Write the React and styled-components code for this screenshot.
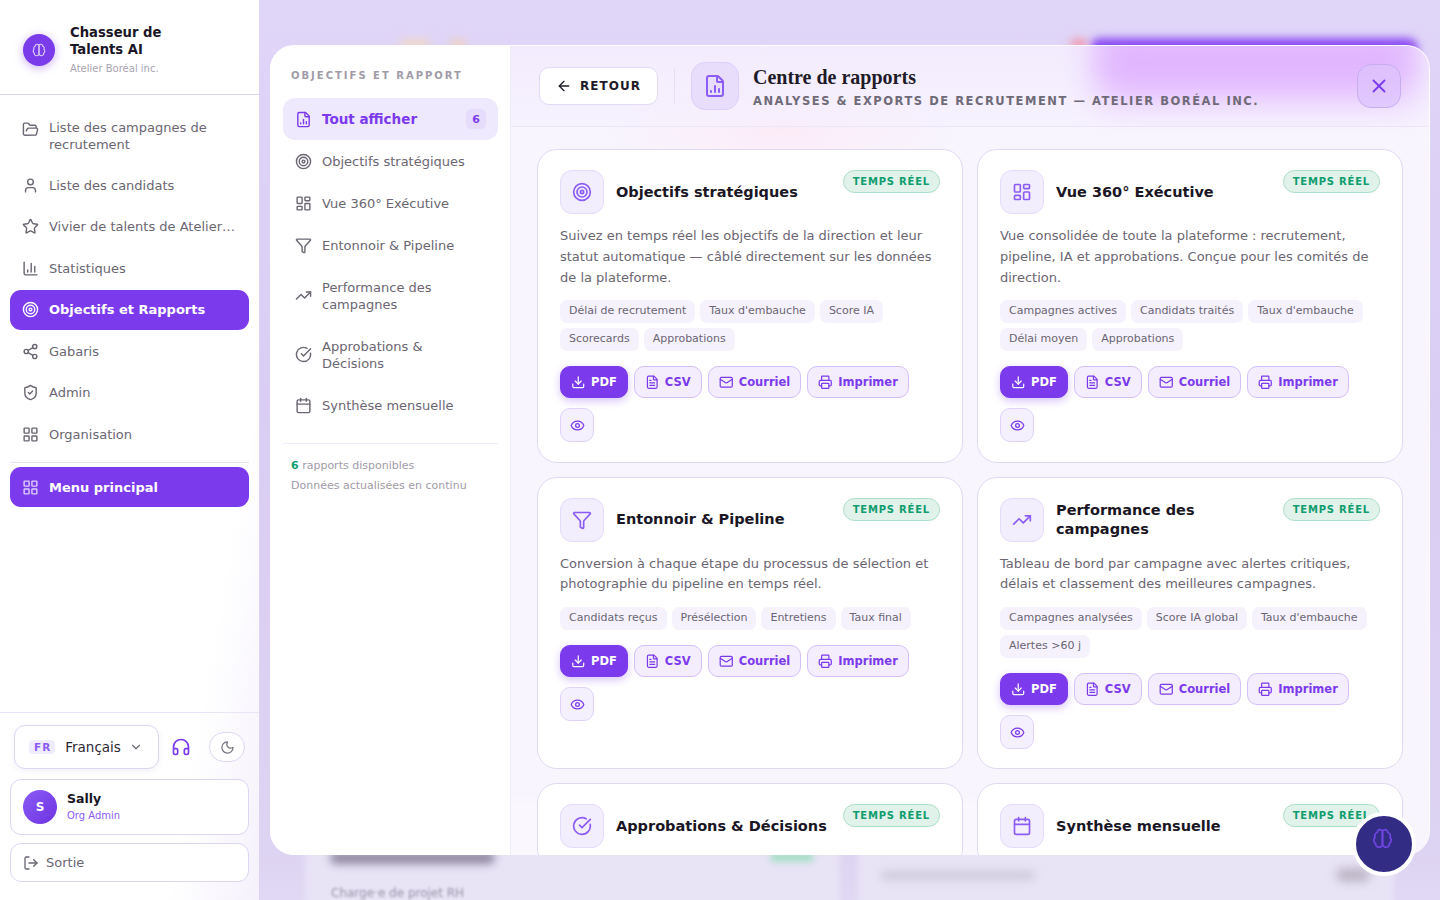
import React from "react";
import styled, { createGlobalStyle } from "styled-components";
import {
  FolderOpen, User, Star, ChartColumn, Target, Share2, ShieldCheck, LayoutGrid, LayoutDashboard,
  Headphones, Moon, LogOut, ChevronDown, ArrowLeft, X, FileChartColumn, Funnel, TrendingUp,
  CircleCheckBig, Calendar, Download, FileText, Mail, Printer, Eye,
} from "lucide-react";

const GlobalStyle = createGlobalStyle`
  html, body { margin: 0; padding: 0; height: 100%; overflow: hidden; }
  body { font-family: "DejaVu Sans", sans-serif; color: #1a1625; background: #efeafb; }
  * { box-sizing: border-box; }
`;

const Page = styled.div`
  display: flex;
  width: 1440px;
  height: 900px;
  overflow: hidden;
  position: relative;
`;

const Sidebar = styled.aside`
  width: 260px;
  flex: none;
  height: 900px;
  display: flex;
  flex-direction: column;
  border-right: 1px solid #ddd3f5;
  background: linear-gradient(100deg, #fff 78%, #f5f1fc 100%);
  position: relative;
  z-index: 3;
`;
const Brand = styled.div`
  height: 95px;
  flex: none;
  display: flex;
  align-items: center;
  gap: 15px;
  padding: 5px 23px 0;
  border-bottom: 1px solid #ddd6f3;
`;
const BrandLogo = styled.div`
  width: 32px;
  height: 32px;
  flex: none;
  border-radius: 50%;
  background: #7a3bea;
  color: #e0d2fb;
  display: flex;
  align-items: center;
  justify-content: center;
  box-shadow: 0 2px 10px rgba(124, 58, 237, 0.4);
`;
const BrandText = styled.div`
  width: 130px;
`;
const BrandName = styled.div`
  font-size: 13.2px;
  line-height: 17px;
  font-weight: 700;
  color: #1a1625;
`;
const BrandSub = styled.div`
  font-size: 10px;
  line-height: 12px;
  margin-top: 5px;
  color: #a8a3b0;
`;
const NavList = styled.nav`
  padding: ${(p) => (p.$flush ? "0 10px" : "13.5px 10px 0")};
  display: flex;
  flex-direction: column;
  gap: 1.5px;
`;
const NavItem = styled.div`
  display: flex;
  align-items: ${(p) => (p.$tall ? "flex-start" : "center")};
  gap: 10px;
  min-height: 40px;
  padding: ${(p) => (p.$tall ? "10px 12px 11px" : "0 12px")};
  border-radius: 11px;
  font-size: 13px;
  line-height: 17px;
  font-weight: ${(p) => (p.$active ? 700 : 400)};
  color: ${(p) => (p.$active ? "#fff" : "#6b6672")};
  background: ${(p) => (p.$active ? "#7c3aed" : "transparent")};
  svg {
    flex: none;
    margin-top: ${(p) => (p.$tall ? "2px" : "0")};
    opacity: ${(p) => (p.$dim ? 0.75 : 1)};
  }
`;
const NavLabel = styled.span`
  white-space: ${(p) => (p.$wrap ? "normal" : "nowrap")};
`;
const SideDivider = styled.div`
  height: 1px;
  background: #e6e0f6;
  margin: 8px 10px 4px;
`;
const SideFooter = styled.div`
  margin-top: auto;
  border-top: 1px solid #e9e4f8;
  padding: 12px 10px 18px;
  display: flex;
  flex-direction: column;
`;
const ToolRow = styled.div`
  display: flex;
  align-items: center;
  padding-left: 4px;
  height: 44px;
  margin-bottom: 10px;
`;
const LangSelect = styled.div`
  width: 145px;
  height: 44px;
  border: 1px solid #ddd6f3;
  border-radius: 11px;
  background: #fff;
  display: flex;
  align-items: center;
  padding: 0 14px;
  font-size: 13.5px;
  color: #2b2733;
  box-shadow: 0 2px 6px rgba(90, 60, 180, 0.08);
`;
const LangCode = styled.span`
  font-size: 10.5px;
  font-weight: 700;
  letter-spacing: 1px;
  color: #8b5cf6;
  background: #f1ecfd;
  border-radius: 4px;
  padding: 1px 4px 1px 5px;
  margin-right: 10px;
`;
const Caret = styled(ChevronDown)`
  margin-left: 8px;
  color: #6b6672;
`;
const HeadsetBtn = styled.div`
  width: 20px;
  margin-left: 12px;
  color: #7c3aed;
  display: flex;
`;
const ThemeBtn = styled.div`
  width: 36px;
  height: 30px;
  margin-left: 18px;
  border-radius: 15px;
  border: 1px solid #ddd6f3;
  background: #fff;
  color: #77727f;
  display: flex;
  align-items: center;
  justify-content: center;
`;
const UserCard = styled.div`
  height: 56px;
  border: 1px solid #ddd6f3;
  border-radius: 11px;
  display: flex;
  align-items: center;
  gap: 10px;
  padding: 0 12px;
  background: #fff;
`;
const Avatar = styled.div`
  width: 34px;
  height: 34px;
  border-radius: 50%;
  background: linear-gradient(135deg, #8b5cf6, #6d32e0);
  color: #fff;
  font-size: 12px;
  font-weight: 700;
  display: flex;
  align-items: center;
  justify-content: center;
`;
const UserName = styled.div`
  font-size: 12.5px;
  font-weight: 700;
  line-height: 16px;
  color: #1a1625;
`;
const UserRole = styled.div`
  font-size: 10px;
  line-height: 15px;
  margin-top: 1px;
  color: #8b5cf6;
`;
const LogoutBtn = styled.div`
  height: 39px;
  margin-top: 8px;
  border: 1px solid #ddd6f3;
  border-radius: 11px;
  display: flex;
  align-items: center;
  gap: 7px;
  padding: 0 12px;
  font-size: 13px;
  color: #6b6672;
  background: #fff;
`;

/* page behind the modal, only seen blurred */
const Backdrop = styled.div`
  flex: 1;
  position: relative;
  background: linear-gradient(180deg, #e0d6f8 0%, #d9cdf3 45%, #ddd3f2 94%, #e0d8f4 100%);
  overflow: hidden;
`;
const BlurBar = styled.div`
  position: absolute;
  left: ${(p) => p.$x}px;
  top: ${(p) => p.$y}px;
  width: ${(p) => p.$w}px;
  height: ${(p) => p.$h}px;
  background: ${(p) => p.$c};
  border-radius: ${(p) => p.$r || 8}px;
  filter: blur(${(p) => p.$b || 5}px);
`;
const BlurText = styled.div`
  position: absolute;
  left: 71px;
  top: 886px;
  font-size: 12px;
  color: #9a94a8;
  filter: blur(1.2px);
`;

const Modal = styled.div`
  position: absolute;
  left: 270px;
  top: 45px;
  width: 1160px;
  height: 810px;
  border-radius: 24px;
  display: flex;
  overflow: hidden;
  z-index: 4;
  border-top: 1px solid #fff;
  border-right: 1px solid rgba(255, 255, 255, 0.7);
  background: rgba(255, 255, 255, 0.78);
`;
const ModalNav = styled.div`
  width: 241px;
  flex: none;
  background: #fff;
  border-right: 1px solid #f0ebfa;
  padding: 23px 12px 0 13px;
`;
const NavHeading = styled.div`
  font-size: 10px;
  line-height: 14px;
  font-weight: 700;
  letter-spacing: 2px;
  color: #a09ba8;
  padding-left: 8px;
  margin-bottom: 15px;
  white-space: nowrap;
`;
const ReportLink = styled.div`
  display: flex;
  align-items: center;
  gap: 10px;
  min-height: 42px;
  padding: ${(p) => (p.$tall ? "12.5px 12px" : "0 12px")};
  border-radius: 12px;
  font-size: ${(p) => (p.$active ? "13.5px" : "13px")};
  line-height: 17px;
  font-weight: ${(p) => (p.$active ? 700 : 400)};
  color: ${(p) => (p.$active ? "#7c3aed" : "#6b6672")};
  background: ${(p) => (p.$active ? "#efe9fd" : "transparent")};
  svg { flex: none; }
`;
const CountBadge = styled.span`
  margin-left: auto;
  width: 20px;
  height: 20px;
  border-radius: 5px;
  background: #e6dcfc;
  font-size: 11px;
  display: flex;
  align-items: center;
  justify-content: center;
`;
const NavFoot = styled.div`
  margin-top: 17px;
  border-top: 1px solid #f0ebfa;
  padding: 12px 8px 0;
  font-size: 11px;
  line-height: 20px;
  color: #a09ba8;
  b { color: #0f9d6e; }
`;
const ModalMain = styled.div`
  flex: 1;
  min-width: 0;
  display: flex;
  flex-direction: column;
  background: radial-gradient(ellipse 180px 60px at 270px 82px, rgba(255, 225, 240, 0.5), transparent), rgba(250, 247, 254, 0.35);
`;
const ModalHead = styled.div`
  height: 81px;
  flex: none;
  display: flex;
  align-items: center;
  padding: 0 28px;
  position: relative;
  border-bottom: 1px solid #ece6f9;
  background: linear-gradient(180deg, rgba(240, 231, 253, 0.7), rgba(245, 240, 254, 0.7));
`;
const HeadGlow = styled.div`
  position: absolute;
  left: 585px;
  top: -22px;
  width: 320px;
  height: 76px;
  background: rgba(220, 165, 255, 0.75);
  border-radius: 16px;
  filter: blur(16px);
`;
const BackBtn = styled.div`
  width: 119px;
  height: 38px;
  border: 1px solid #e2daf6;
  border-radius: 10px;
  background: #fff;
  display: flex;
  align-items: center;
  justify-content: center;
  gap: 8px;
  font-size: 12px;
  font-weight: 700;
  letter-spacing: 1px;
  color: #1f1b29;
`;
const HeadSep = styled.div`
  width: 1px;
  height: 36px;
  background: #e6dff7;
  margin: 0 16px;
`;
const HeadIcon = styled.div`
  width: 48px;
  height: 48px;
  border-radius: 14px;
  border: 1px solid #dccffa;
  background: #e8defc;
  color: #8b5cf6;
  display: flex;
  align-items: center;
  justify-content: center;
  margin-right: 14px;
`;
const HeadText = styled.div`
  position: relative;
  padding-top: 2px;
`;
const HeadTitle = styled.div`
  font-family: "Liberation Serif", serif;
  font-size: 20px;
  line-height: 25px;
  font-weight: 700;
  color: #1f1b29;
`;
const HeadSub = styled.div`
  font-size: 11.5px;
  line-height: 15px;
  margin-top: 4px;
  font-weight: 700;
  letter-spacing: 1.53px;
  color: #6f6a78;
  white-space: nowrap;
`;
const CloseBtn = styled.div`
  position: relative;
  margin-left: auto;
  width: 44px;
  height: 44px;
  border-radius: 14px;
  border: 1px solid #c5aef0;
  background: rgba(220, 195, 252, 0.75);
  color: #7c3aed;
  display: flex;
  align-items: center;
  justify-content: center;
`;
const CardGrid = styled.div`
  display: grid;
  grid-template-columns: 426px 426px;
  grid-auto-rows: min-content;
  gap: 14px;
  padding: 22px 26px;
  overflow: hidden;
  flex: 1;
`;
const Card = styled.div`
  border: 1px solid #e0d9f2;
  border-radius: 20px;
  background: #fff;
  padding: 20px 22px 19.2px;
`;
const CardTop = styled.div`
  display: flex;
  align-items: flex-start;
  min-height: 44px;
`;
const CardIcon = styled.div`
  width: 44px;
  height: 44px;
  flex: none;
  border-radius: 12px;
  border: 1px solid #e4daf9;
  background: #f3eefd;
  color: #8b5cf6;
  display: flex;
  align-items: center;
  justify-content: center;
  margin-right: 12px;
`;
const CardTitle = styled.div`
  flex: 1;
  align-self: center;
  font-size: 14.5px;
  line-height: 19px;
  font-weight: 700;
  color: #1a1625;
`;
const LiveBadge = styled.div`
  flex: none;
  height: 23px;
  padding: 0 9px;
  border-radius: 12px;
  border: 1px solid #acdfc9;
  background: #e0f2ea;
  color: #0f9d6e;
  font-size: 10px;
  font-weight: 700;
  letter-spacing: 0.8px;
  display: flex;
  align-items: center;
  white-space: nowrap;
`;
const CardDesc = styled.p`
  margin: 12px 0 12px;
  font-size: 13px;
  line-height: 1.6;
  color: #6b6672;
`;
const Chips = styled.div`
  display: flex;
  flex-wrap: wrap;
  gap: 5px;
  margin-bottom: 15px;
`;
const Chip = styled.span`
  height: 23px;
  padding: 0 9px;
  border-radius: 7px;
  background: #f5f2fe;
  font-size: 11px;
  line-height: 21px;
  color: #6b6672;
`;
const Actions = styled.div`
  display: flex;
  flex-wrap: wrap;
  gap: 10px 6px;
`;
const ActionBtn = styled.div`
  height: 32px;
  padding: 0 10px;
  border-radius: 10px;
  display: flex;
  align-items: center;
  gap: 5.5px;
  font-size: 11.5px;
  font-weight: 700;
  color: ${(p) => (p.$primary ? "#fff" : "#7c3aed")};
  background: ${(p) => (p.$primary ? "#7c3aed" : "#f3edfd")};
  border: 1px solid ${(p) => (p.$primary ? "#7c3aed" : "#d4c0f8")};
  box-shadow: ${(p) => (p.$primary ? "0 3px 8px rgba(124, 58, 237, 0.3)" : "none")};
`;
const EyeBtn = styled.div`
  width: 34px;
  height: 34px;
  border-radius: 10px;
  border: 1px solid #e0d2fb;
  background: #f5f0fe;
  color: #7c3aed;
  display: flex;
  align-items: center;
  justify-content: center;
`;
const Fab = styled.div`
  position: absolute;
  left: 1352px;
  top: 812px;
  width: 64px;
  height: 64px;
  border-radius: 50%;
  border: 4px solid #fff;
  background: #332c85;
  color: #6f45e0;
  display: flex;
  justify-content: center;
  padding: 12px 4px 0 0;
  z-index: 5;
`;

function BrainGlyph({ size, strokeWidth }) {
  return (
    <svg width={size} height={size} viewBox="0 0 24 24" fill="none" stroke="currentColor" strokeWidth={strokeWidth} strokeLinecap="round" strokeLinejoin="round">
      <path d="M12 5a3 3 0 1 0-5.997.125 4 4 0 0 0-2.526 5.77 4 4 0 0 0 .556 6.588A4 4 0 1 0 12 18Z" />
      <path d="M12 5a3 3 0 1 1 5.997.125 4 4 0 0 1 2.526 5.77 4 4 0 0 1-.556 6.588A4 4 0 1 1 12 18Z" />
    </svg>
  );
}

const mainNav = [
  { icon: FolderOpen, label: "Liste des campagnes de recrutement", tall: true },
  { icon: User, label: "Liste des candidats" },
  { icon: Star, label: "Vivier de talents de Atelier…" },
  { icon: ChartColumn, label: "Statistiques" },
  { icon: Target, label: "Objectifs et Rapports", active: true },
  { icon: Share2, label: "Gabaris" },
  { icon: ShieldCheck, label: "Admin" },
  { icon: LayoutGrid, label: "Organisation" },
];

const reportNav = [
  { icon: Target, label: "Objectifs stratégiques" },
  { icon: LayoutDashboard, label: "Vue 360° Exécutive" },
  { icon: Funnel, label: "Entonnoir & Pipeline" },
  { icon: TrendingUp, label: "Performance des campagnes", tall: true },
  { icon: CircleCheckBig, label: "Approbations & Décisions", tall: true },
  { icon: Calendar, label: "Synthèse mensuelle" },
];

const reports = [
  {
    icon: Target,
    title: "Objectifs stratégiques",
    desc: "Suivez en temps réel les objectifs de la direction et leur statut automatique — câblé directement sur les données de la plateforme.",
    chips: ["Délai de recrutement", "Taux d'embauche", "Score IA", "Scorecards", "Approbations"],
  },
  {
    icon: LayoutDashboard,
    title: "Vue 360° Exécutive",
    desc: "Vue consolidée de toute la plateforme : recrutement, pipeline, IA et approbations. Conçue pour les comités de direction.",
    chips: ["Campagnes actives", "Candidats traités", "Taux d'embauche", "Délai moyen", "Approbations"],
  },
  {
    icon: Funnel,
    title: "Entonnoir & Pipeline",
    desc: "Conversion à chaque étape du processus de sélection et photographie du pipeline en temps réel.",
    chips: ["Candidats reçus", "Présélection", "Entretiens", "Taux final"],
  },
  {
    icon: TrendingUp,
    title: "Performance des campagnes",
    desc: "Tableau de bord par campagne avec alertes critiques, délais et classement des meilleures campagnes.",
    chips: ["Campagnes analysées", "Score IA global", "Taux d'embauche", "Alertes >60 j"],
  },
  { icon: CircleCheckBig, title: "Approbations & Décisions" },
  { icon: Calendar, title: "Synthèse mensuelle" },
];

function ReportCard({ report }) {
  const Icon = report.icon;
  return (
    <Card>
      <CardTop>
        <CardIcon><Icon size={20} /></CardIcon>
        <CardTitle>{report.title}</CardTitle>
        <LiveBadge>TEMPS RÉEL</LiveBadge>
      </CardTop>
      {report.desc && (
        <>
          <CardDesc>{report.desc}</CardDesc>
          <Chips>
            {report.chips.map((c) => <Chip key={c}>{c}</Chip>)}
          </Chips>
          <Actions>
            <ActionBtn $primary><Download size={14.5} />PDF</ActionBtn>
            <ActionBtn><FileText size={14.5} />CSV</ActionBtn>
            <ActionBtn><Mail size={14.5} />Courriel</ActionBtn>
            <ActionBtn><Printer size={14.5} />Imprimer</ActionBtn>
            <EyeBtn><Eye size={15} /></EyeBtn>
          </Actions>
        </>
      )}
    </Card>
  );
}

export default function App() {
  return (
    <Page>
      <GlobalStyle />
      <Sidebar>
        <Brand>
          <BrandLogo><BrainGlyph size={14} strokeWidth={1.8} /></BrandLogo>
          <BrandText>
            <BrandName>Chasseur de Talents AI</BrandName>
            <BrandSub>Atelier Boréal inc.</BrandSub>
          </BrandText>
        </Brand>
        <NavList>
          {mainNav.map((item) => {
            const Icon = item.icon;
            return (
              <NavItem key={item.label} $active={item.active} $tall={item.tall}>
                <Icon size={17} />
                <NavLabel $wrap={item.tall}>{item.label}</NavLabel>
              </NavItem>
            );
          })}
        </NavList>
        <SideDivider />
        <NavList $flush>
          <NavItem $active $dim><LayoutGrid size={17} /><NavLabel>Menu principal</NavLabel></NavItem>
        </NavList>
        <SideFooter>
          <ToolRow>
            <LangSelect>
              <LangCode>FR</LangCode>Français
              <Caret size={14} />
            </LangSelect>
            <HeadsetBtn><Headphones size={20} /></HeadsetBtn>
            <ThemeBtn><Moon size={15} /></ThemeBtn>
          </ToolRow>
          <UserCard>
            <Avatar>S</Avatar>
            <div>
              <UserName>Sally</UserName>
              <UserRole>Org Admin</UserRole>
            </div>
          </UserCard>
          <LogoutBtn><LogOut size={16} />Sortie</LogoutBtn>
        </SideFooter>
      </Sidebar>

      <Backdrop>
        <BlurBar $x={830} $y={38} $w={328} $h={40} $c="#8d4bf3" $r={10} $b={4} />
        <BlurBar $x={810} $y={38} $w={18} $h={14} $c="#f0a0b8" $b={4} />
        <BlurBar $x={140} $y={40} $w={30} $h={8} $c="#f3d9c0" $b={5} />
        <BlurBar $x={190} $y={40} $w={16} $h={8} $c="#f3d0b8" $b={4} />
        <BlurBar $x={45} $y={800} $w={535} $h={110} $c="#e8e3f5" $r={4} $b={3} />
        <BlurBar $x={598} $y={800} $w={536} $h={110} $c="#e8e3f5" $r={4} $b={3} />
        <BlurBar $x={70} $y={852} $w={165} $h={12} $c="#8f88a0" $b={4} />
        <BlurBar $x={510} $y={852} $w={44} $h={10} $c="#a8dfc8" $b={3} />
        <BlurBar $x={621} $y={871} $w={154} $h={9} $c="#cfc9dc" $b={4} />
        <BlurBar $x={1076} $y={868} $w={34} $h={14} $c="#bdb7c8" $b={5} />
        <BlurText>Charge·e de projet RH</BlurText>
      </Backdrop>

      <Modal>
        <ModalNav>
          <NavHeading>OBJECTIFS ET RAPPORT</NavHeading>
          <ReportLink $active>
            <FileChartColumn size={17} />Tout afficher<CountBadge>6</CountBadge>
          </ReportLink>
          {reportNav.map((item) => {
            const Icon = item.icon;
            return (
              <ReportLink key={item.label} $tall={item.tall}>
                <Icon size={17} />
                <span>{item.label}</span>
              </ReportLink>
            );
          })}
          <NavFoot>
            <div><b>6</b> rapports disponibles</div>
            <div>Données actualisées en continu</div>
          </NavFoot>
        </ModalNav>
        <ModalMain>
          <ModalHead>
            <HeadGlow />
            <BackBtn><ArrowLeft size={16} />RETOUR</BackBtn>
            <HeadSep />
            <HeadIcon><FileChartColumn size={24} /></HeadIcon>
            <HeadText>
              <HeadTitle>Centre de rapports</HeadTitle>
              <HeadSub>ANALYSES &amp; EXPORTS DE RECRUTEMENT — ATELIER BORÉAL INC.</HeadSub>
            </HeadText>
            <CloseBtn><X size={22} /></CloseBtn>
          </ModalHead>
          <CardGrid>
            {reports.map((r) => <ReportCard key={r.title} report={r} />)}
          </CardGrid>
        </ModalMain>
      </Modal>
      <Fab><BrainGlyph size={21} strokeWidth={2} /></Fab>
    </Page>
  );
}
